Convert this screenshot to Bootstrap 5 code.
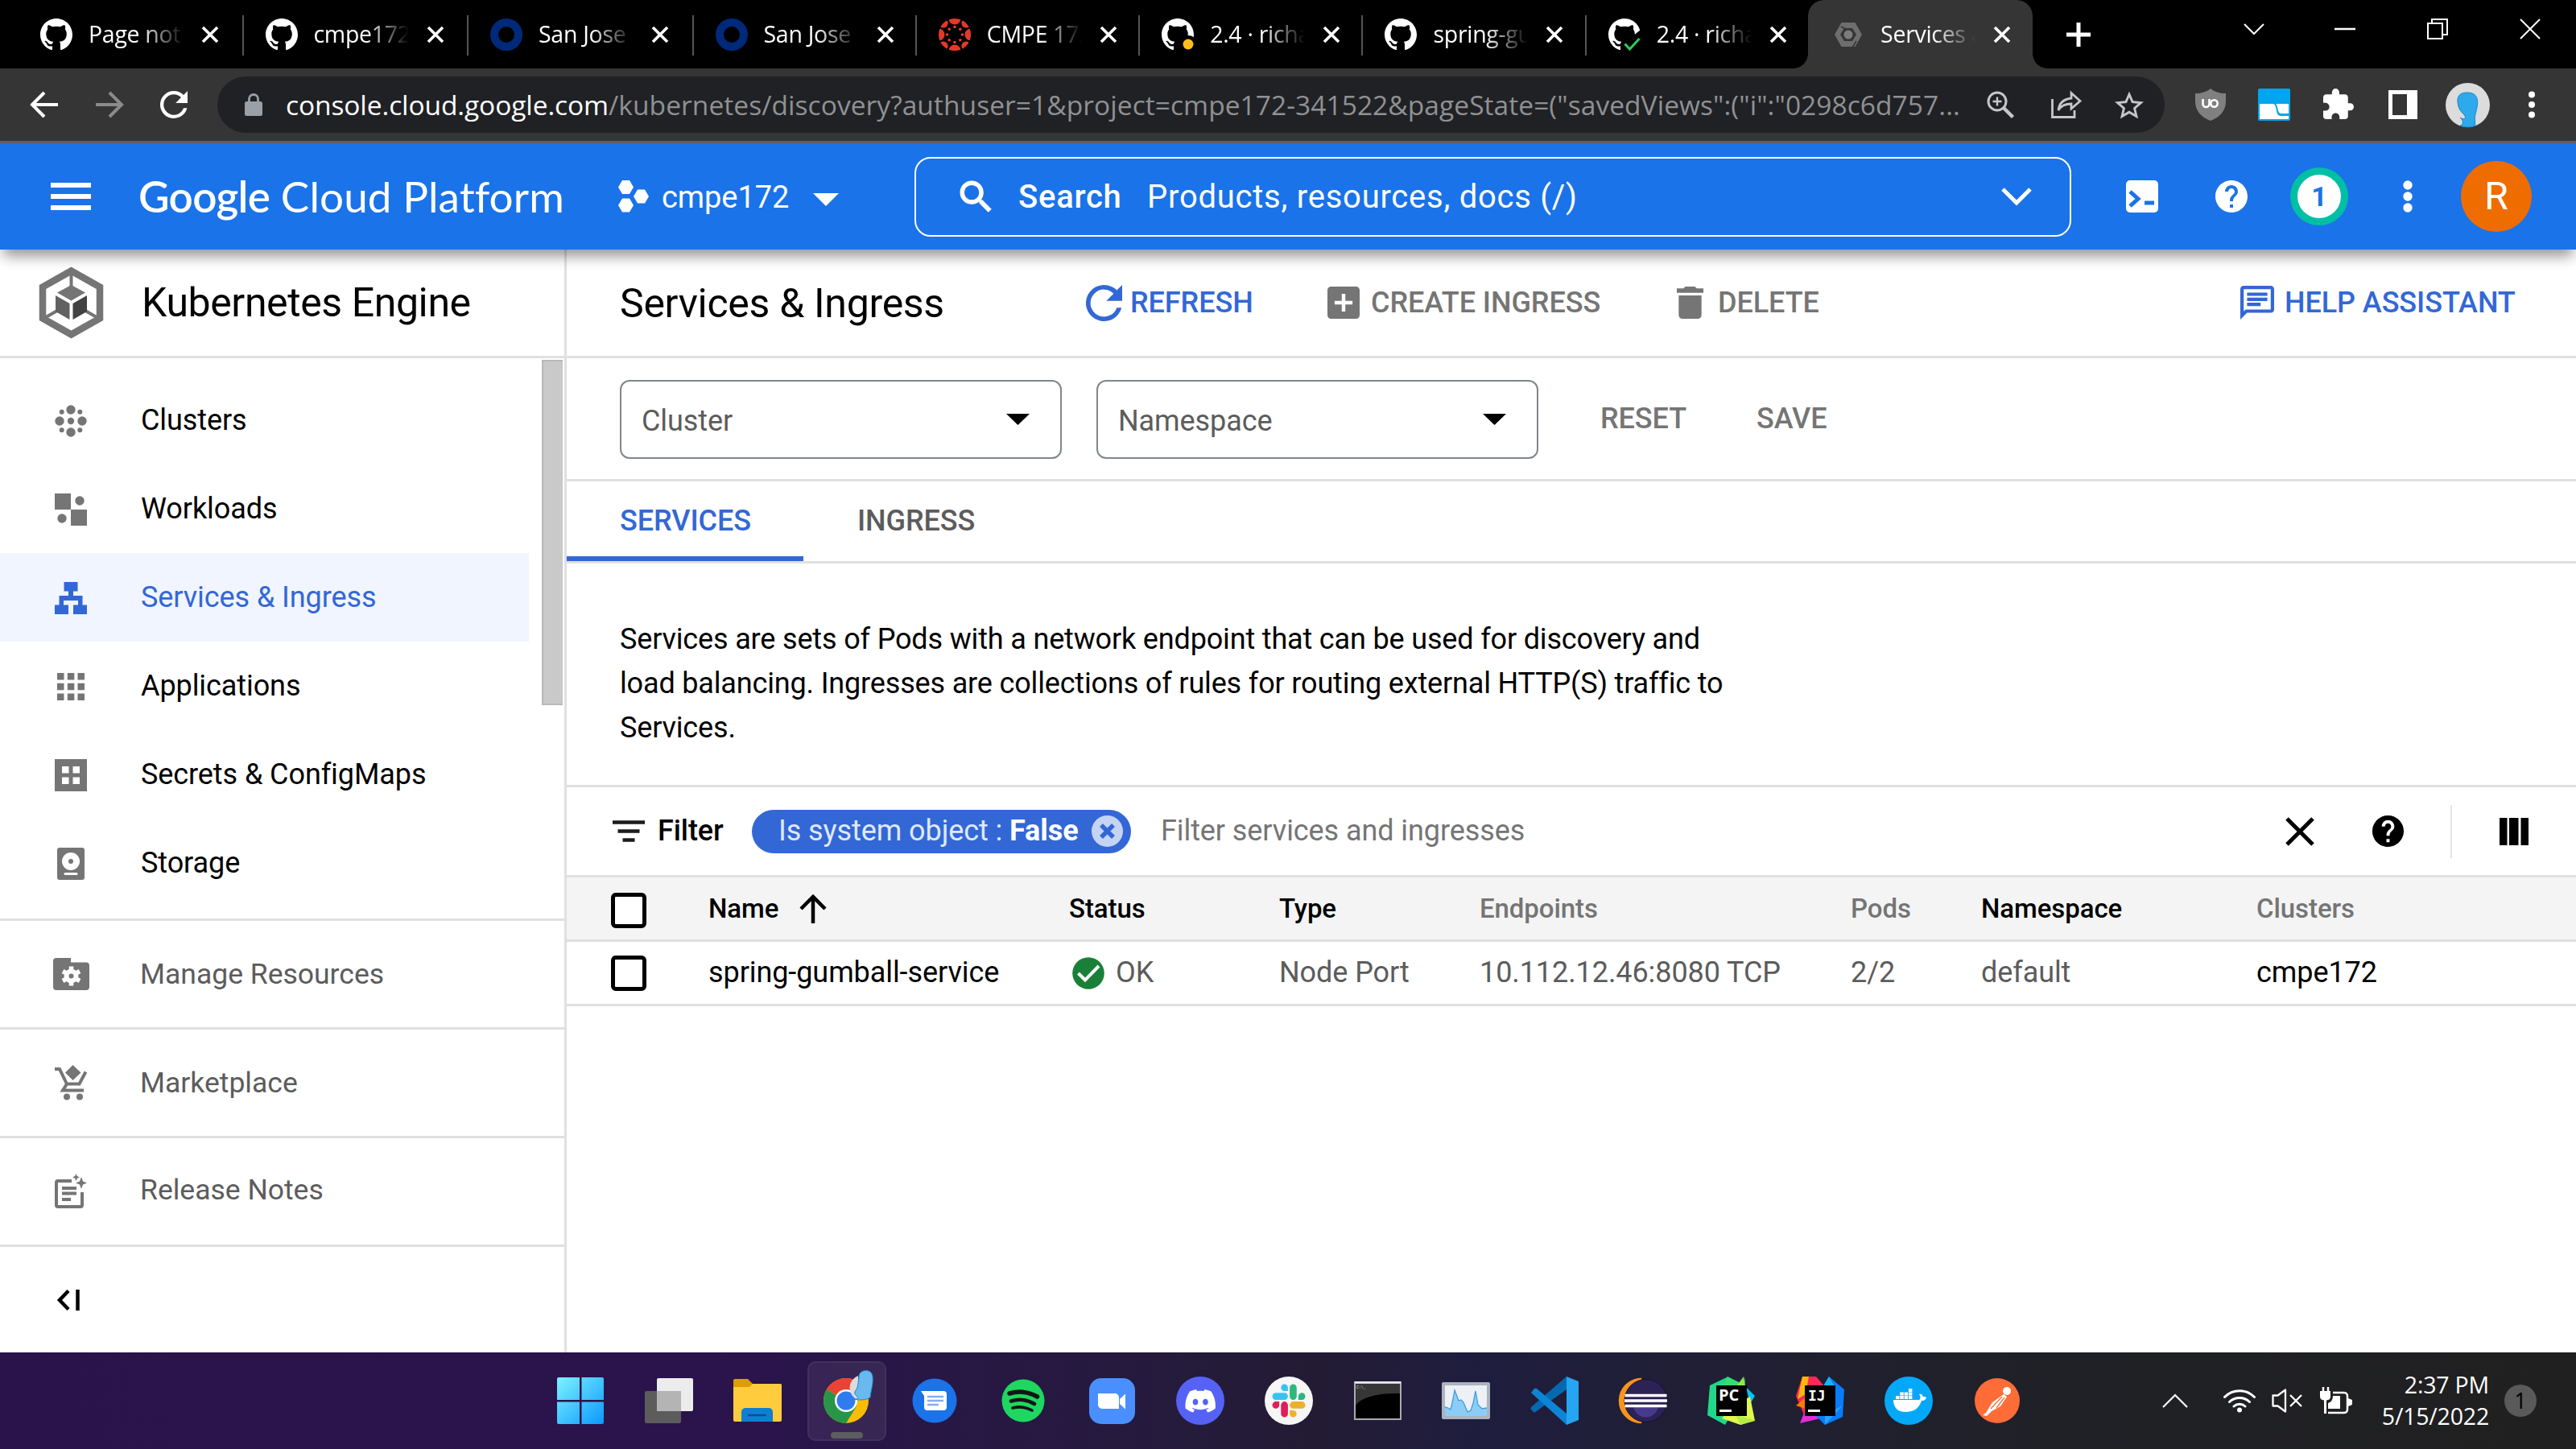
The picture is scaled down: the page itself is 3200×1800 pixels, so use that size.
<!DOCTYPE html>
<html lang="en">
<head>
<meta charset="utf-8">
<title>Services &amp; Ingress – Kubernetes Engine</title>
<link href="https://cdn.jsdelivr.net/npm/bootstrap@5.3.0/dist/css/bootstrap.min.css" rel="stylesheet">
<style>
html,body{height:1800px;overflow:hidden}
body{width:3200px;background:#fff;color:#000;font-family:Roboto,"Liberation Sans",sans-serif;font-size:36px;line-height:1.2;letter-spacing:-.08px}
svg{display:block;flex:none;overflow:visible}
.gridbar{display:grid;align-items:center}
.ui-sys{font-family:"Open Sans","Noto Sans",sans-serif}
.fw-med{font-weight:500}
/* browser chrome */
.tabstrip{height:85px;background:#000;color:#fff;padding-left:24px}
.btab{width:277.4px;height:85px;padding-left:26px;position:relative}
.btab:nth-child(-n+3){width:279.6px}
.btab::after{content:"";position:absolute;right:1px;top:19px;width:2px;height:50px;background:#555}
.btab.last-idle::after,.btab.on::after{display:none}
.btab .ttl{width:118px;margin-left:20px;font-size:28.5px;letter-spacing:-.3px;white-space:nowrap;overflow:hidden;-webkit-mask-image:linear-gradient(90deg,#000 55%,transparent 100%);mask-image:linear-gradient(90deg,#000 55%,transparent 100%)}
.btab .cls{margin-left:22px}
.btab.on{width:279px;margin-left:-3px;padding-left:30px;background:#353535;border-radius:20px 20px 0 0}
.btab .flare{position:absolute;bottom:0;width:18px;height:18px}
.btab .fl{left:-18px;background:radial-gradient(circle at 0 0,transparent 17.5px,#353535 18px)}
.btab .fr{right:-18px;background:radial-gradient(circle at 100% 0,transparent 17.5px,#353535 18px)}
.newtab{margin-left:42px}
.winctl{grid-template-columns:113px 115px 115px 70px;height:72px;margin-left:190px;align-self:flex-start}
.toolbar{height:93px;background:#353535;border-bottom:3px solid #606060;padding-left:38px;grid-template-columns:81px 80px 71px 2457px 78px 81px 81px 71px 102px 1fr}
.omni{width:2419px;height:70px;border-radius:35px;background:#202124;padding-left:34px;grid-template-columns:51px 2113px 80px 79px 1fr}
.omni .url{font-size:33.5px;letter-spacing:.06px;color:#8f9194;white-space:nowrap}
.omni .url b{font-weight:400;color:#fff;letter-spacing:-.1px}
/* cloud header */
.gcp{height:132px;background:#1a73e8;color:#fff;position:relative;z-index:3;box-shadow:0 12px 16px -4px rgba(0,0,0,.42);padding-left:63px;grid-template-columns:109px 596px 54px 188px 126px 1505px 111px 93px 140px 72px 1fr}
.glogo{font-family:Lato,sans-serif;font-size:53px;letter-spacing:.1px;white-space:nowrap}
.glogo span{letter-spacing:-.7px}
.gcp .proj{font-size:38px;padding-top:4px}
.gsearch{width:1437px;height:99px;border:2px solid #fff;border-radius:20px;padding-left:55px;font-size:40px;grid-template-columns:72px 160px 1061px 1fr}
.gsearch span{letter-spacing:.75px;padding-top:2px}
.notif{width:72px;height:72px;border:9px solid #00bfa5;border-radius:50%;background:#fff;color:#1a73e8;font-size:34px;font-weight:700}
.avat{width:88px;height:88px;border-radius:50%;background:#ef6c00;font-size:48px}
/* page */
.page{height:1370px}
.side{width:704px;border-right:3px solid #e0e0e0}
.side-head{height:135px;border-bottom:3px solid #e0e0e0;font-size:50px;letter-spacing:-.4px;padding-left:49px;gap:48px}
.side-scroll{height:696px;padding-top:22px;position:relative}
.side-scroll .thumb{position:absolute;right:2px;top:2px;width:26px;height:429px;background:#c9c9c9;border:2px solid #b8b8b8;border-right:0}
.side .nav-link{width:657px;height:110px;padding:1px 0 0 68px;gap:67px;color:#000;display:flex;align-items:center}
.side .nav-link svg{color:#757575}
.side .nav-link.active{background:#f0f5ff;color:#3367d6}
.side .nav-link.active svg{color:#3367d6}
.side-foot{height:135px;border-top:3px solid #e0e0e0;padding-left:66px;gap:63px;color:#5c5c5c;font-size:35.5px;letter-spacing:0}
.side-foot svg{color:#757575}
.actions{height:135px;border-bottom:3px solid #e0e0e0;padding-left:66px;grid-template-columns:579px 55px 245px 54px 380px 51px 649px 55px 1fr;color:#757575}
.actions span{padding-top:1px}
.actions .h-title{font-size:50px;color:#000;letter-spacing:-.3px}
.blue{color:#3367d6}
.filters{height:153px;border-bottom:3px solid #e0e0e0;padding:2px 0 0 66px;color:#757575}
.sel{width:549px;height:98px;border:2px solid #80868b;border-radius:12px;padding:5px 38px 0 25px;color:#5c5c5c;margin-right:43px}
.sel svg{margin-bottom:6px}
.f-reset{width:194px;margin-left:34px}
.tabsrow{height:102px;border-bottom:3px solid #e0e0e0}
.tabsrow .tb{height:99px;text-decoration:none;display:flex;align-items:center;color:#5c5c5c;padding:1px 0 0 67px}
.tabsrow .tb.cur{width:294px;color:#3367d6;border-bottom:6px solid #3367d6;padding:7px 0 0 66px}
.desc{height:278px;border-bottom:3px solid #e0e0e0;padding:67px 0 0 66px;line-height:55px;letter-spacing:-.16px}
.fbar{height:112px;border-bottom:3px solid #e0e0e0;padding-left:57px;grid-template-columns:56px 117px 508px 1397px 108px 97px 61px 1fr}
.chip{width:471px;height:54px;border-radius:27px;background:#3367d6;color:#dfe8fa;padding-left:33px}
.chip b{font-weight:700;color:#fff}
.svc{table-layout:fixed;border-collapse:separate;border-spacing:0;margin:0;width:2496px}
.svc>thead>tr>*,.svc>tbody>tr>*{height:80px;padding:0;border:0;border-bottom:3px solid #e0e0e0;vertical-align:middle;white-space:nowrap;box-shadow:none;line-height:1.2}
.svc thead th{background:#f4f4f4;font-size:33px;font-weight:500;color:#000}
.svc thead th.dim{color:#757575}
.svc tbody td{background:#fff;color:#5c5c5c}
.svc .strong-c{color:#000}
.cbx{width:44px;height:44px;border:5px solid #000;border-radius:6px;background:#fff;margin-left:55px}
thead .cbx{margin-top:5px}
/* taskbar */
.taskbar{height:120px;background:linear-gradient(90deg,#2a134b 0,#2a144b 30%,#241b3a 47%,#231b34 51%,#1f1d3e 57%,#201f33 68%,#202126 80%,#202020 100%);color:#fff}
.apps{margin-left:666px}
.slot{width:110px;height:120px}
.slot.on{position:relative}
.slot.on::before{content:"";position:absolute;left:7px;top:11px;width:98px;height:99px;border-radius:10px;background:rgba(255,255,255,.07);border:2px solid rgba(255,255,255,.05)}
.slot.on::after{content:"";position:absolute;left:36px;top:99px;width:40px;height:8px;border-radius:4px;background:#5d5d5f}
.slot svg{position:relative}
.tray{padding-left:150px}
.clock{width:200px;margin-left:-30px;font-size:28.5px;line-height:39px;letter-spacing:-.2px}
.cnt{width:40px;height:40px;border-radius:50%;background:#5a5a5a;color:#000;font-size:27px;margin-left:19px}
</style>
<script src="https://cdn.jsdelivr.net/npm/bootstrap@5.3.0/dist/js/bootstrap.bundle.min.js"></script>
</head>
<body>
<svg width="0" height="0" class="position-absolute">
<defs>
<symbol id="gh" viewBox="0 0 16 16"><path fill="#fff" d="M8 0C3.58 0 0 3.58 0 8c0 3.54 2.29 6.53 5.47 7.59.4.07.55-.17.55-.38 0-.19-.01-.82-.01-1.49-2.01.37-2.53-.49-2.69-.94-.09-.23-.48-.94-.82-1.13-.28-.15-.68-.52-.01-.53.63-.01 1.08.58 1.23.82.72 1.21 1.87.87 2.33.66.07-.52.28-.87.51-1.07-1.78-.2-3.64-.89-3.64-3.95 0-.87.31-1.59.82-2.15-.08-.2-.36-1.02.08-2.12 0 0 .67-.21 2.2.82.64-.18 1.32-.27 2-.27.68 0 1.36.09 2 .27 1.53-1.04 2.2-.82 2.2-.82.44 1.1.16 1.92.08 2.12.51.56.82 1.27.82 2.15 0 3.07-1.87 3.75-3.65 3.95.29.25.54.73.54 1.48 0 1.07-.01 1.93-.01 2.2 0 .21.15.46.55.38A8.013 8.013 0 0016 8c0-4.42-3.58-8-8-8z"/></symbol>
<symbol id="x" viewBox="0 0 22 22"><path d="M2 2l18 18M20 2L2 20" stroke="#fff" stroke-width="3.6" fill="none"/></symbol>
<symbol id="ring" viewBox="0 0 40 40"><circle cx="20" cy="20" r="15" fill="none" stroke="#00297a" stroke-width="10"/></symbol>
<symbol id="help" viewBox="2 2 20 20"><path fill="currentColor" d="M12 2C6.48 2 2 6.48 2 12s4.48 10 10 10 10-4.48 10-10S17.52 2 12 2zm1 17h-2v-2h2v2zm2.07-7.75l-.9.92C13.45 12.9 13 13.5 13 15h-2v-.5c0-1.1.45-2.1 1.17-2.83l1.24-1.26c.37-.36.59-.86.59-1.41 0-1.1-.9-2-2-2s-2 .9-2 2H8c0-2.21 1.79-4 4-4s4 1.79 4 4c0 .88-.36 1.68-.93 2.25z"/></symbol>
</defs>
</svg>

<!-- tab strip -->
<div class="tabstrip ui-sys d-flex align-items-center">
  <div class="btab d-flex align-items-center"><svg width="40" height="40"><use href="#gh"/></svg><span class="ttl">Page not found</span><svg class="cls" width="22" height="22"><use href="#x"/></svg></div>
  <div class="btab d-flex align-items-center"><svg width="40" height="40"><use href="#gh"/></svg><span class="ttl">cmpe172/</span><svg class="cls" width="22" height="22"><use href="#x"/></svg></div>
  <div class="btab d-flex align-items-center"><svg width="40" height="40"><use href="#ring"/></svg><span class="ttl">San Jose</span><svg class="cls" width="22" height="22"><use href="#x"/></svg></div>
  <div class="btab d-flex align-items-center"><svg width="40" height="40"><use href="#ring"/></svg><span class="ttl">San Jose</span><svg class="cls" width="22" height="22"><use href="#x"/></svg></div>
  <div class="btab d-flex align-items-center"><svg width="40" height="40" viewBox="-20 -20 40 40"><clipPath id="cc"><circle r="20"/></clipPath><g fill="#e4392a"><g clip-path="url(#cc)"><circle cx="20" r="7.500"/><circle cx="-20" r="7.500"/><circle cy="20" r="7.500"/><circle cy="-20" r="7.500"/><circle cx="14.200" cy="14.200" r="5.800"/><circle cx="-14.200" cy="14.200" r="5.800"/><circle cx="14.200" cy="-14.200" r="5.800"/><circle cx="-14.200" cy="-14.200" r="5.800"/></g><circle cx="9.500" r="1.800"/><circle cx="-9.500" r="1.800"/><circle cy="9.500" r="1.800"/><circle cy="-9.500" r="1.800"/><circle cx="6.800" cy="6.800" r="1.800"/><circle cx="-6.800" cy="6.800" r="1.800"/><circle cx="6.800" cy="-6.800" r="1.800"/><circle cx="-6.800" cy="-6.800" r="1.800"/></g></svg><span class="ttl">CMPE 172</span><svg class="cls" width="22" height="22"><use href="#x"/></svg></div>
  <div class="btab d-flex align-items-center"><svg width="40" height="40"><use href="#gh"/><circle cx="33" cy="32" r="11" fill="#000"/><circle cx="33" cy="32" r="6.5" fill="#fbbf17"/></svg><span class="ttl">2.4 · richard</span><svg class="cls" width="22" height="22"><use href="#x"/></svg></div>
  <div class="btab d-flex align-items-center"><svg width="40" height="40"><use href="#gh"/></svg><span class="ttl">spring-gumball</span><svg class="cls" width="22" height="22"><use href="#x"/></svg></div>
  <div class="btab last-idle d-flex align-items-center"><svg width="40" height="40"><use href="#gh"/><path d="M19 40V31L40 14V40z" fill="#000"/><path d="M20.500 31.500l6 6.500 12-13" fill="none" stroke="#2ecc57" stroke-width="3"/></svg><span class="ttl">2.4 · richard</span><svg class="cls" width="22" height="22"><use href="#x"/></svg></div>
  <div class="btab on d-flex align-items-center"><i class="flare fl"></i><i class="flare fr"></i><svg width="40" height="40" viewBox="0 0 40 40"><path d="M11.500 5h17L37 20l-8.500 15h-17L3 20z M15 12l-5 8 5 8h10l5-8-5-8z" fill="#6e6e6e" fill-rule="evenodd"/><circle cx="20" cy="20" r="5.500" fill="#7c7c7c"/><path d="M11 10l6 3M30 28l-5 8" stroke="#353535" stroke-width="1.500"/></svg><span class="ttl">Services &amp;</span><svg class="cls" width="22" height="22"><use href="#x"/></svg></div>
  <svg class="newtab" width="30" height="30" viewBox="0 0 30 30"><path d="M15 0v30M0 15h30" stroke="#fff" stroke-width="5"/></svg>
  <div class="winctl gridbar">
    <svg width="26" height="14" viewBox="0 0 26 14"><path d="M1 1l12 12L25 1" stroke="#fff" stroke-width="2" fill="none"/></svg>
    <svg width="26" height="4"><path d="M0 2h26" stroke="#fff" stroke-width="2.500"/></svg>
    <svg width="26" height="26" viewBox="0 0 26 26"><path d="M1 6h18v19H1zM6 6V1h19v19h-5" stroke="#fff" stroke-width="2" fill="none"/></svg>
    <svg width="26" height="26" viewBox="0 0 26 26"><path d="M1 1l24 24M25 1L1 25" stroke="#fff" stroke-width="2"/></svg>
  </div>
</div>

<!-- address bar -->
<div class="toolbar gridbar">
  <svg width="34" height="32" viewBox="0 0 34 32"><path d="M34 16H3M17 1L2 16l15 15" fill="none" stroke="#fff" stroke-width="4"/></svg>
  <svg width="34" height="32" viewBox="0 0 34 32"><path d="M0 16h31M17 1l15 15-15 15" fill="none" stroke="#8b8b8b" stroke-width="4"/></svg>
  <svg width="34" height="34" viewBox="4 4 16 16"><path fill="#fff" d="M17.650 6.350A7.960 7.960 0 0 0 12 4a8 8 0 1 0 7.730 10h-2.080A6 6 0 1 1 12 6c1.660 0 3.140.69 4.220 1.780L13 11h7V4l-2.350 2.350z"/></svg>
  <div class="omni gridbar ui-sys">
    <svg width="22" height="28" viewBox="0 0 22 28"><rect y="10" width="22" height="18" rx="2.500" fill="#9aa0a6"/><path d="M5.500 11V7a5.500 5.500 0 0 1 11 0v4" fill="none" stroke="#9aa0a6" stroke-width="2.800"/></svg>
    <span class="url"><b>console.cloud.google.com</b>/kubernetes/discovery?authuser=1&amp;project=cmpe172-341522&amp;pageState=("savedViews":("i":"0298c6d757...</span>
    <svg width="34" height="34" viewBox="0 0 34 34" fill="none" stroke="#c4c7c9" stroke-width="3"><circle cx="13" cy="13" r="11"/><path d="M21 21l11.500 11.500" stroke-width="4.500"/><path d="M13 7.500v11M7.500 13h11" stroke-width="2.400"/></svg>
    <svg width="38" height="34" viewBox="0 0 38 34" fill="none" stroke="#c4c7c9" stroke-width="2.800"><path d="M1.500 10v22.500H29V24"/><path d="M25 2.500L36 12.500 25 22v-6c-8 0-13 2.500-16 8 1-9 7-14 16-15z"/></svg>
    <svg width="36" height="35" viewBox="2 2 20 19"><path fill="#c4c7c9" d="M22 9.240l-7.190-.62L12 2 9.190 8.630 2 9.240l5.460 4.730L5.820 21 12 17.270 18.180 21l-1.630-7.030L22 9.240zM12 15.400l-3.760 2.270 1-4.280-3.320-2.880 4.380-.38L12 6.100l1.710 4.040 4.380.38-3.320 2.880 1 4.280L12 15.400z"/></svg>
  </div>
  <svg width="38" height="40" viewBox="0 0 38 40"><path d="M19 0c5 4 11 6 19 6v10c0 12-8 20-19 24C8 36 0 28 0 16V6c8 0 14-2 19-6z" fill="#808080"/><path d="M9.500 13v6a4 4 0 0 0 8 0v-6v6" fill="none" stroke="#fff" stroke-width="2.600"/><circle cx="23.500" cy="18.500" r="4.200" fill="none" stroke="#fff" stroke-width="2.600"/></svg>
  <svg width="40" height="40" viewBox="0 0 40 40"><rect width="40" height="40" rx="2" fill="#04a5f0"/><path d="M2 19h16c4 0 4 4 5 9s3 6 6 6h9v4H2z" fill="#fff"/><path d="M22 19h16v12h-9c-4 0-4-4-5-8s-2-4-2-4z" fill="#fff"/></svg>
  <svg width="38" height="38" viewBox="2 1.500 21 21"><path fill="#fff" d="M20.500 11H19V7c0-1.100-.9-2-2-2h-4V3.500a2.500 2.500 0 0 0-5 0V5H4c-1.100 0-1.990.9-1.990 2v3.800H3.500c1.490 0 2.700 1.210 2.700 2.700s-1.210 2.700-2.700 2.700H2V20c0 1.100.9 2 2 2h3.800v-1.500c0-1.490 1.210-2.700 2.700-2.700 1.490 0 2.700 1.210 2.700 2.700V22H17c1.100 0 2-.9 2-2v-4h1.500a2.500 2.500 0 0 0 0-5z"/></svg>
  <svg width="36" height="36" viewBox="0 0 36 36"><path fill="#fff" fill-rule="evenodd" d="M0 0h36v36H0zM5 5v26h18V5z"/></svg>
  <svg width="55" height="55" viewBox="0 0 55 55"><circle cx="27.500" cy="27.500" r="27.500" fill="#dcdcdc"/><path d="M18 43c5 4 4 9 0 10 6 2.500 13 2.500 19 0-1-7-1-12 1-18 4-15 1-23-11-23S14 19 15.500 27s6 10 8.500 14c2 4-2 5-6 2z" fill="#2da9ec" stroke="#1b87c4"/></svg>
  <svg width="10" height="34" viewBox="0 0 10 34" fill="#fff"><circle cx="5" cy="4.500" r="4"/><circle cx="5" cy="17" r="4"/><circle cx="5" cy="29.500" r="4"/></svg>
</div>

<!-- cloud console header -->
<header class="gcp gridbar">
  <svg width="50" height="34"><path d="M0 3h50M0 17h50M0 31h50" stroke="#fff" stroke-width="6"/></svg>
  <span class="glogo"><span class="fw-semibold">Google</span> Cloud Platform</span>
  <svg width="38" height="40" viewBox="0 0 38 40" fill="#fff"><path d="M5 0h9l5 8.500-5 8.500H5L0 8.500zM5 22.500h9l5 8.500-5 8.500H5L0 31zM24 11.500h9l5 8.500-5 8.500h-9L19 20z"/></svg>
  <span class="proj">cmpe172</span>
  <svg width="32" height="16" viewBox="0 0 32 16" class="mt-2"><path d="M0 0h32L16 16z" fill="#fff"/></svg>
  <div class="gsearch gridbar">
    <svg width="38" height="38" viewBox="3 3 17.500 17.500"><path fill="#fff" stroke="#fff" stroke-width=".5" d="M15.500 14h-.79l-.28-.27A6.471 6.471 0 0 0 16 9.500 6.500 6.500 0 1 0 9.500 16c1.610 0 3.090-.59 4.230-1.570l.27.28v.79l5 4.990L20.490 19l-4.990-5zm-6 0C7.010 14 5 11.990 5 9.500S7.010 5 9.500 5 14 7.010 14 9.500 11.990 14 9.500 14z"/></svg>
    <span class="fw-med">Search</span><span>Products, resources, docs (/)</span>
    <svg width="38" height="22" viewBox="0 0 38 22"><path d="M2 2l17 17L36 2" fill="none" stroke="#fff" stroke-width="5"/></svg>
  </div>
  <svg width="40" height="40" viewBox="0 0 40 40"><rect width="40" height="40" rx="5" fill="#fff"/><path d="M5 14l10 9-10 9" fill="none" stroke="#1a73e8" stroke-width="5"/><path d="M23 28h12" stroke="#1a73e8" stroke-width="5"/></svg>
  <svg width="40" height="40"><use href="#help"/></svg>
  <span class="notif d-flex align-items-center justify-content-center">1</span>
  <svg width="12" height="40" viewBox="0 0 12 40" fill="#fff"><circle cx="6" cy="6" r="5.700"/><circle cx="6" cy="20" r="5.700"/><circle cx="6" cy="34" r="5.700"/></svg>
  <span class="avat d-flex align-items-center justify-content-center">R</span>
</header>

<div class="page d-flex">
  <aside class="side">
    <div class="side-head d-flex align-items-center">
      <svg width="79" height="88" viewBox="0 0 79 88"><path d="M39.500 4.500L75 24.500v39l-35.500 20L4 63.500v-39z" fill="none" stroke="#757575" stroke-width="8.500"/><path d="M39.500 8v16M8 62l14-8M71 62l-14-8" stroke="#757575" stroke-width="4"/><path d="M39.500 22l17.500 9.500-17.500 10-17.500-10z" fill="#757575"/><path d="M20 35l17.500 10v20L20 55z" fill="#616161"/><path d="M59 35L41.500 45v20L59 55z" fill="#424242"/></svg>
      <span>Kubernetes Engine</span>
    </div>
    <nav class="side-scroll nav flex-column flex-nowrap">
      <a class="nav-link"><svg width="40" height="40" viewBox="0 0 40 40" fill="currentColor"><circle cx="20" cy="6" r="5.700"/><circle cx="20" cy="34" r="5.700"/><circle cx="6" cy="20" r="5.700"/><circle cx="34" cy="20" r="5.700"/><circle cx="20" cy="20" r="4.200"/><circle cx="8.700" cy="8.700" r="3"/><circle cx="31.300" cy="8.700" r="3"/><circle cx="8.700" cy="31.300" r="3"/><circle cx="31.300" cy="31.300" r="3"/></svg>Clusters</a>
      <a class="nav-link"><svg width="40" height="40" viewBox="0 0 40 40" fill="currentColor"><path d="M0 0h20v20H0zM20 20h20v20H20z"/><circle cx="31" cy="9" r="5.700"/><circle cx="9" cy="31" r="5.700"/></svg>Workloads</a>
      <a class="nav-link active"><svg width="40" height="40" viewBox="0 0 40 40" fill="currentColor"><path d="M11.500 0h17v11.500h-5.500v5.500h11.500v11.500H40V40H23V28.500h6V23H11v5.500h6V40H0V28.500h5.500V17H17v-5.500h-5.500z"/></svg>Services &amp; Ingress</a>
      <a class="nav-link"><svg width="40" height="40" viewBox="0 0 40 40" fill="currentColor"><path d="M3 3h8.500v8.500H3zM15.800 3h8.500v8.500h-8.500zM28.500 3H37v8.500h-8.500zM3 15.800h8.500v8.500H3zM15.800 15.800h8.500v8.500h-8.500zM28.500 15.800H37v8.500h-8.500zM3 28.500h8.500V37H3zM15.800 28.500h8.500V37h-8.500zM28.500 28.500H37V37h-8.500z"/></svg>Applications</a>
      <a class="nav-link"><svg width="40" height="40" viewBox="0 0 40 40" fill="currentColor"><path fill-rule="evenodd" d="M0 0h40v40H0zM9 9v8.500h8.500V9zM22.500 9v8.500H31V9zM9 22.500V31h8.500v-8.500zM22.500 22.500V31H31v-8.500z"/></svg>Secrets &amp; ConfigMaps</a>
      <a class="nav-link"><svg width="40" height="40" viewBox="0 0 40 40"><rect x="3" width="34" height="40" rx="3" fill="currentColor"/><circle cx="20" cy="17" r="11" fill="#fff"/><circle cx="20" cy="17" r="3" fill="currentColor"/><path d="M13 32.500h14" stroke="#fff" stroke-width="3" stroke-linecap="round"/></svg>Storage</a>
      <i class="thumb"></i>
    </nav>
    <div class="side-foot d-flex align-items-center"><svg width="45" height="40" viewBox="0 0 45 40"><path d="M4 0h18v5.500h19a4 4 0 0 1 4 4V36a4 4 0 0 1-4 4H4a4 4 0 0 1-4-4V4a4 4 0 0 1 4-4z" fill="currentColor"/><circle cx="22.500" cy="22.500" r="6" fill="none" stroke="#fff" stroke-width="6"/><g stroke="#fff" stroke-width="5.500"><path d="M22.500 10.500v4M22.500 30.500v4M12 16.500l3.500 2M29.500 26.500l3.500 2M12 28.500l3.500-2M29.500 18.500l3.500-2"/></g></svg><span>Manage Resources</span></div>
    <div class="side-foot d-flex align-items-center"><svg width="45" height="44" viewBox="0 0 45 44"><path d="M24.500 0l10 9.500-10 9.500-9.500-9.500z" fill="currentColor"/><path d="M2 5h6l9 18.500h15.500L40.500 8.500M17 23.500l-5 8h26" fill="none" stroke="currentColor" stroke-width="4"/><circle cx="17" cy="39.500" r="4" fill="currentColor"/><circle cx="33" cy="39.500" r="4" fill="currentColor"/></svg><span>Marketplace</span></div>
    <div class="side-foot d-flex align-items-center"><svg width="45" height="44" viewBox="0 0 45 44"><path d="M23 9H6a2 2 0 0 0-2 2v28a2 2 0 0 0 2 2h28a2 2 0 0 0 2-2V23" fill="none" stroke="currentColor" stroke-width="4"/><path d="M11 18h18M11 24.500h18M11 32h11" stroke="currentColor" stroke-width="4"/><path d="M35 4l2 5.500 5 2-5 2-2 5.500-2-5.500-5-2 5-2zM28.500 0l1.300 3 3.200 1.500-3.200 1.300-1.300 3.200-1.300-3.200L24 4.500 27.200 3z" fill="currentColor"/></svg><span class="mb-1">Release Notes</span></div>
    <div class="side-foot d-flex align-items-center"><svg style="margin-left:6px" width="27" height="26" viewBox="0 0 27 26"><path d="M13 1.500L2 13l11 11.500M24.500 0v26" fill="none" stroke="#000" stroke-width="4.500"/></svg></div>
  </aside>

  <main class="flex-grow-1">
    <div class="actions gridbar fw-med">
      <span class="h-title fw-normal">Services &amp; Ingress</span>
      <svg width="45" height="45" viewBox="4 4 16 16" class="blue"><path fill="currentColor" d="M17.650 6.350A7.960 7.960 0 0 0 12 4a8 8 0 1 0 7.730 10h-2.080A6 6 0 1 1 12 6c1.660 0 3.140.69 4.220 1.780L13 11h7V4l-2.350 2.350z"/></svg>
      <span class="blue">REFRESH</span>
      <svg width="40" height="40" viewBox="3 3 18 18"><path fill="currentColor" d="M19 3H5a2 2 0 0 0-2 2v14a2 2 0 0 0 2 2h14a2 2 0 0 0 2-2V5a2 2 0 0 0-2-2zm-2 10h-4v4h-2v-4H7v-2h4V7h2v4h4v2z"/></svg>
      <span>CREATE INGRESS</span>
      <svg width="33" height="40" viewBox="5 3 14 18" preserveAspectRatio="none"><path fill="currentColor" d="M6 19a2 2 0 0 0 2 2h8a2 2 0 0 0 2-2V8H6v11zM19 4h-3.500l-1-1h-5l-1 1H5v2.500h14V4z"/></svg>
      <span>DELETE</span>
      <svg width="42" height="42" viewBox="2 2 20 20" class="blue"><path fill="currentColor" d="M4 4h16v12H5.170L4 17.170V4m0-2c-1.100 0-1.990.9-1.990 2L2 22l4-4h14c1.100 0 2-.9 2-2V4c0-1.100-.9-2-2-2H4zm2 10h8v2H6v-2zm0-3h12v2H6V9zm0-3h12v2H6V6z"/></svg>
      <span class="blue">HELP ASSISTANT</span>
    </div>
    <div class="filters d-flex align-items-center">
      <div class="sel d-flex align-items-center justify-content-between">Cluster<svg width="29" height="14" viewBox="0 0 29 14"><path d="M0 0h29L14.500 14z"/></svg></div>
      <div class="sel d-flex align-items-center justify-content-between">Namespace<svg width="29" height="14" viewBox="0 0 29 14"><path d="M0 0h29L14.500 14z"/></svg></div>
      <span class="f-reset fw-med">RESET</span>
      <span class="fw-med">SAVE</span>
    </div>
    <div class="tabsrow d-flex fw-med">
      <a class="tb cur">SERVICES</a><a class="tb">INGRESS</a>
    </div>
    <p class="desc mb-0">Services are sets of Pods with a network endpoint that can be used for discovery and<br>load balancing. Ingresses are collections of rules for routing external HTTP(S) traffic to<br>Services.</p>
    <div class="fbar gridbar">
      <svg width="40" height="27"><path d="M0 2.500h40M6.500 13.500h27M12.500 24.500h15" stroke="#1c1c1c" stroke-width="4.600"/></svg>
      <span class="fw-med">Filter</span>
      <span class="chip d-flex align-items-center">Is system object&nbsp;:&nbsp;<b>False</b><svg width="39" height="39" viewBox="0 0 39 39" class="ms-3"><circle cx="19.500" cy="19.500" r="19.500" fill="#c5d4f4"/><path d="M12 12l15 15M27 12L12 27" stroke="#3367d6" stroke-width="5.500"/></svg></span>
      <span style="color:#757575">Filter services and ingresses</span>
      <svg width="36" height="36" viewBox="0 0 36 36"><path d="M2 2l32 32M34 2L2 34" stroke="#000" stroke-width="5"/></svg>
      <svg width="39" height="39"><use href="#help"/></svg>
      <svg width="2" height="66"><path d="M1 0v66" stroke="#e4e4e4" stroke-width="2"/></svg>
      <svg width="36" height="34" viewBox="0 0 36 34"><path d="M0 0h9.500v34H0zM12 0h11.500v34H12zM26.500 0H36v34h-9.500z"/></svg>
    </div>
    <table class="table svc">
      <colgroup><col style="width:176px"><col style="width:448px"><col style="width:261px"><col style="width:249px"><col style="width:461px"><col style="width:162px"><col style="width:342px"><col></colgroup>
      <thead><tr><th><div class="cbx"></div></th><th><div class="d-flex align-items-center">Name<svg style="margin-left:26px" width="34" height="36" viewBox="0 0 34 36"><path d="M17 36V4M2 18L17 3l15 15" fill="none" stroke="#000" stroke-width="4.500"/></svg></div></th><th>Status</th><th>Type</th><th class="dim">Endpoints</th><th class="dim">Pods</th><th>Namespace</th><th class="dim">Clusters</th></tr></thead>
      <tbody><tr><td><div class="cbx"></div></td><td class="strong-c">spring-gumball-service</td><td><div class="d-flex align-items-center"><svg style="margin:0 14px 0 4px" width="40" height="40" viewBox="0 0 40 40"><circle cx="20" cy="20" r="19.800" fill="#1a8038"/><path d="M7.500 20l8.500 8.500L33 11" fill="none" stroke="#fff" stroke-width="4"/></svg>OK</div></td><td>Node Port</td><td>10.112.12.46:8080 TCP</td><td>2/2</td><td>default</td><td class="strong-c">cmpe172</td></tr></tbody>
    </table>
  </main>
</div>

<!-- taskbar -->
<footer class="taskbar ui-sys d-flex align-items-center">
  <div class="apps d-flex">
    <div class="slot d-flex align-items-center justify-content-center"><svg width="58" height="58" viewBox="0 0 58 58"><defs><linearGradient id="w" x2="1" y2="1"><stop stop-color="#7df3ff"/><stop offset="1" stop-color="#0a98ff"/></linearGradient></defs><path d="M2 0h26v28H0V2a2 2 0 0 1 2-2zM30.500 0H56a2 2 0 0 1 2 2v26H30.500zM0 30.500h28V58H2a2 2 0 0 1-2-2zM30.500 30.500H58V56a2 2 0 0 1-2 2H30.500z" fill="url(#w)"/></svg></div>
    <div class="slot d-flex align-items-center justify-content-center"><svg width="60" height="56" viewBox="0 0 60 56"><rect y="16" width="45" height="40" rx="2" fill="#5c5c5c"/><rect x="15" width="45" height="41" rx="2" fill="#ececec"/><path d="M15 16h30v25H15z" fill="#b4b4b4"/></svg></div>
    <div class="slot d-flex align-items-center justify-content-center"><svg width="60" height="54" viewBox="0 0 60 54"><path d="M2 0h16l6 6h34a2 2 0 0 1 2 2v15H0V2a2 2 0 0 1 2-2z" fill="#dd9d05"/><path d="M0 10h20l4-4h34a2 2 0 0 1 2 2v43a2 2 0 0 1-2 2H2a2 2 0 0 1-2-2z" fill="#ffcc3d"/><path d="M10 53V41a5 5 0 0 1 5-5h29a5 5 0 0 1 5 5v12z" fill="#0f7fd2"/><path d="M18 45h23" stroke="#0a4f98" stroke-width="2.500"/></svg></div>
    <div class="slot on d-flex align-items-center justify-content-center"><svg width="56" height="56" viewBox="0 0 56 56"><circle cx="28" cy="28" r="28" fill="#fbbc05"/><path d="M28 28L3.800 14A28 28 0 0 1 52.200 14z" fill="#ea4335"/><path d="M28 0a28 28 0 0 1 24.200 14H28z" fill="#ea4335"/><path d="M3.800 14A28 28 0 0 0 28 56l13-21-13-7z" fill="#299547"/><circle cx="28" cy="28" r="14" fill="#fff"/><circle cx="28" cy="28" r="11.500" fill="#2f7cf0"/><path d="M43 -3a16 16 0 0 0 0 30z" fill="#dcdcdc"/><path d="M43 24c-3-3-6-4-3-9 3-3 3-10 4-17 0-9 16-11 17 0 1 10-2 16-3 26-4 3-15 4-19 2 3 0 4-1 4-2z" fill="#69b8f0" stroke="#1f86c8"/></svg></div>
    <div class="slot d-flex align-items-center justify-content-center"><svg width="56" height="56" viewBox="0 0 56 56"><circle cx="28" cy="28" r="27.500" fill="#1a73e8"/><path d="M11 16h28a4 4 0 0 1 4 4v16a4 4 0 0 1-4 4H19a4 4 0 0 1-4-4V22z" fill="#fff"/><path d="M19 23h20M19 28h20M19 33h14" stroke="#86adf2" stroke-width="2.400"/></svg></div>
    <div class="slot d-flex align-items-center justify-content-center"><svg width="54" height="54" viewBox="0 0 54 54"><circle cx="27" cy="27" r="26.500" fill="#1ed760"/><path d="M10 18c12-3.500 24-2 34.500 4" stroke-width="5.500" fill="none" stroke="#151515" stroke-linecap="round"/><path d="M12 27.500c10-3 20-2 29 3.500" stroke-width="4.500" fill="none" stroke="#151515" stroke-linecap="round"/><path d="M14 36c8-2 16-1.500 24 3" stroke-width="3.600" fill="none" stroke="#151515" stroke-linecap="round"/></svg></div>
    <div class="slot d-flex align-items-center justify-content-center"><svg width="57" height="57" viewBox="0 0 57 57"><rect width="57" height="57" rx="15" fill="#4a8fff"/><path d="M11 19h21a5 5 0 0 1 5 5v14H16a5 5 0 0 1-5-5zM38 26l7-6.500v19L38 32z" fill="#fff"/></svg></div>
    <div class="slot d-flex align-items-center justify-content-center"><svg width="60" height="60" viewBox="0 0 60 60"><circle cx="30" cy="30" r="30" fill="#5662f6"/><g transform="translate(11.500 11.500) scale(1.560)"><path fill="#fff" d="M20.317 4.370a19.790 19.790 0 00-4.885-1.515.074.074 0 00-.079.037c-.211.375-.445.865-.608 1.250-1.845-.276-3.680-.276-5.487 0-.164-.393-.406-.874-.618-1.250a.077.077 0 00-.079-.037 19.736 19.736 0 00-4.885 1.515.070.070 0 00-.032.028C.533 9.046-.319 13.580.099 18.058a.082.082 0 00.031.056c2.053 1.508 4.041 2.423 5.993 3.029a.078.078 0 00.084-.028c.462-.630.873-1.295 1.226-1.994a.076.076 0 00-.042-.106c-.653-.248-1.274-.550-1.872-.892a.077.077 0 01-.008-.128c.126-.094.252-.192.372-.291a.074.074 0 01.078-.011c3.928 1.793 8.180 1.793 12.061 0a.074.074 0 01.079.010c.120.099.246.198.373.292a.077.077 0 01-.007.128 12.299 12.299 0 01-1.873.891.077.077 0 00-.041.107c.360.698.772 1.363 1.225 1.993a.076.076 0 00.084.029c1.961-.607 3.950-1.522 6.002-3.029a.077.077 0 00.031-.055c.500-5.177-.838-9.674-3.549-13.660a.061.061 0 00-.031-.029zM8.020 15.331c-1.183 0-2.157-1.086-2.157-2.419 0-1.333.956-2.419 2.157-2.419 1.211 0 2.176 1.095 2.157 2.419 0 1.333-.956 2.419-2.157 2.419zm7.975 0c-1.183 0-2.157-1.086-2.157-2.419 0-1.333.955-2.419 2.157-2.419 1.211 0 2.176 1.095 2.157 2.419 0 1.333-.946 2.419-2.157 2.419z"/></g></svg></div>
    <div class="slot d-flex align-items-center justify-content-center"><svg width="60" height="60" viewBox="0 0 60 60"><circle cx="30" cy="30" r="30" fill="#f6f6f6"/><g transform="translate(9.500 9.500) scale(1.710)"><path fill="#e01e5a" d="M5.042 15.165a2.528 2.528 0 0 1-2.520 2.523A2.528 2.528 0 0 1 0 15.165a2.527 2.527 0 0 1 2.522-2.520h2.520v2.520zM6.313 15.165a2.527 2.527 0 0 1 2.521-2.520 2.527 2.527 0 0 1 2.521 2.520v6.313A2.528 2.528 0 0 1 8.834 24a2.528 2.528 0 0 1-2.521-2.522v-6.313z"/><path fill="#36c5f0" d="M8.834 5.042a2.528 2.528 0 0 1-2.521-2.520A2.528 2.528 0 0 1 8.834 0a2.528 2.528 0 0 1 2.521 2.522v2.520H8.834zM8.834 6.313a2.528 2.528 0 0 1 2.521 2.521 2.528 2.528 0 0 1-2.521 2.521H2.522A2.528 2.528 0 0 1 0 8.834a2.528 2.528 0 0 1 2.522-2.521h6.312z"/><path fill="#2eb67d" d="M18.956 8.834a2.528 2.528 0 0 1 2.522-2.521A2.528 2.528 0 0 1 24 8.834a2.528 2.528 0 0 1-2.522 2.521h-2.522V8.834zM17.688 8.834a2.528 2.528 0 0 1-2.523 2.521 2.527 2.527 0 0 1-2.520-2.521V2.522A2.527 2.527 0 0 1 15.165 0a2.528 2.528 0 0 1 2.523 2.522v6.312z"/><path fill="#ecb22e" d="M15.165 18.956a2.528 2.528 0 0 1 2.523 2.522A2.528 2.528 0 0 1 15.165 24a2.527 2.527 0 0 1-2.520-2.522v-2.522h2.520zM15.165 17.688a2.527 2.527 0 0 1-2.520-2.523 2.526 2.526 0 0 1 2.520-2.520h6.313A2.527 2.527 0 0 1 24 15.165a2.528 2.528 0 0 1-2.522 2.523h-6.313z"/></g></svg></div>
    <div class="slot d-flex align-items-center justify-content-center"><svg width="59" height="48" viewBox="0 0 59 48"><rect width="59" height="48" fill="#a9abae"/><path d="M2 3h55v43H2z" fill="#000"/><path d="M2 3h55v12C30 14 8 20 2 30z" fill="#363636"/><path d="M1 0h57v2.500H1z" fill="#e8e8f0"/><text x="3" y="9" font-size="5" font-family="Liberation Mono" fill="#ccc">C:\_</text></svg></div>
    <div class="slot d-flex align-items-center justify-content-center"><svg width="60" height="46" viewBox="0 0 60 46"><rect width="60" height="46" rx="2" fill="#aab4bf"/><path d="M4 4h52v38H4z" fill="#edf0f4"/><path d="M4 42V31l4 1 3 2 3-13 2-11 5 13 3-1 3 3 5 12 4-2 3-9 3-15 3 17 5 5 6-1v10z" fill="#8ccdf5"/><path d="M4 31l4 1 3 2 3-13 2-11 5 13 3-1 3 3 5 12 4-2 3-9 3-15 3 17 5 5 6-1" fill="none" stroke="#3f9de0" stroke-width="1.300"/></svg></div>
    <div class="slot d-flex align-items-center justify-content-center"><svg width="60" height="60" viewBox="0 0 60 60"><path d="M5 45L45 16V0L1 38q-1 2 0 3z" fill="#0569b0"/><path d="M1 20l4-5q1-1 3 0l37 31v14z" fill="#0e84d6"/><path d="M45 0l15 6v48l-15 6z" fill="#26a5f2"/></svg></div>
    <div class="slot d-flex align-items-center justify-content-center"><svg width="60" height="56" viewBox="0 0 60 56"><path d="M28 1A27 27 0 0 0 28 55 30 30 0 0 1 28 1z" fill="#f7941e" stroke="#f7941e" stroke-width="2.500"/><circle cx="33.500" cy="28" r="26.500" fill="#2c2255" stroke="#15122a"/><path d="M18 33a15 15 0 0 0 31 0z" fill="#473a8c"/><path d="M7.500 21.500h52M7 28h53M7.500 34.500h52" stroke="#fff" stroke-width="3.600"/></svg></div>
    <div class="slot d-flex align-items-center justify-content-center"><svg width="60" height="60" viewBox="0 0 60 60"><path d="M26 0L3 11 0 48l22 12 8-14z" fill="#21d789"/><path d="M25 0l20 10 2-10-2 30-28-10z" fill="#35de73"/><path d="M45 0l-9 12h11z" fill="#8fe84e"/><path d="M48 13l11 11-6 10z" fill="#07c3f2"/><path d="M53 25l6 30-18 5-23-8 14-16z" fill="#e3f64c"/><path d="M59 54L35 48l6 12z" fill="#b3ee44"/><rect x="11" y="11" width="38" height="38" fill="#000"/><text x="14" y="30" font-size="20" font-weight="700" fill="#fff">PC</text><path d="M15 42.500h15" stroke="#fff" stroke-width="3"/></svg></div>
    <div class="slot d-flex align-items-center justify-content-center"><svg width="60" height="60" viewBox="0 0 60 60"><path d="M8 0h17l12 14L12 52 0 24z" fill="#fe2857"/><path d="M8 0h8l-4 22-10 6z" fill="#fdb60d"/><path d="M0 36l12-10v14z" fill="#ff7a00"/><path d="M12 40L5 58l34-8z" fill="#e02fd8"/><path d="M41 0l19 16-2 34-22 10-12-12 12-40z" fill="#087cfa"/><path d="M41 0l8 14-20 6z" fill="#14b5f5"/><path d="M36 48l22-12-22 24z" fill="#2aa0ff"/><rect x="11" y="11" width="38" height="38" fill="#000"/><text x="15" y="30" font-size="18" font-weight="700" fill="#fff" font-family="DejaVu Sans Mono">IJ</text><path d="M15 42.500h15" stroke="#fff" stroke-width="3"/></svg></div>
    <div class="slot d-flex align-items-center justify-content-center"><svg width="60" height="60" viewBox="0 0 60 60"><circle cx="30" cy="30" r="30" fill="#03a8f9"/><path d="M11 29h32c2-1 2-4 0-7 4-1 4 2 5 3 2 0 4 0 4 1-1 4-4 4-6 4-3 9-9 14-20 14-10 0-15-6-15-15z" fill="#fff"/><path d="M14 24h4.500v4H14zM19.300 24h4.500v4h-4.500zM24.600 24h4.500v4h-4.500zM29.900 24h4.500v4h-4.500zM19.300 19.500h4.500v4h-4.500zM24.600 19.500h4.500v4h-4.500zM29.900 19.500h4.500v4h-4.500zM29.900 15h4.500v4h-4.500z" fill="#fff"/></svg></div>
    <div class="slot d-flex align-items-center justify-content-center"><svg width="56" height="56" viewBox="0 0 56 56"><circle cx="28" cy="28" r="28" fill="#ff6c37"/><circle cx="40" cy="16" r="5" fill="#fff"/><path d="M36 20l4 3-8 12-11 6-6 6-5-1 4-3 8-13z" fill="#fff"/><path d="M34 23L20 38M37 24l-10 13" stroke="#ff6c37" stroke-width="1.300"/></svg></div>
  </div>
  <div class="tray d-flex align-items-center">
    <svg width="32" height="18" viewBox="0 0 32 18"><path d="M1 17L16 2l15 15" fill="none" stroke="#fff" stroke-width="2.200"/></svg>
    <svg style="margin-left:44px" width="40" height="30" viewBox="0 0 40 30" fill="none" stroke="#fff" stroke-width="3" stroke-linecap="round"><path d="M1.500 10.500a26 26 0 0 1 37 0M7.500 16.500a18 18 0 0 1 25 0M13 22a10.500 10.500 0 0 1 14 0"/><circle cx="20" cy="26.500" r="2" fill="#fff" stroke-width="2"/></svg>
    <svg style="margin-left:20px" width="38" height="30" viewBox="0 0 38 30" fill="none" stroke="#fff" stroke-width="2.300"><path d="M1.500 8.500h6L17 1.500v27l-9.500-7h-6z" stroke-linejoin="round"/><path d="M23 8l14 14M37 8L23 22"/></svg>
    <svg style="margin-left:22px" width="40" height="34" viewBox="0 0 40 34"><path d="M4 0v6M10 0v6" stroke="#fff" stroke-width="2.500"/><path d="M0 5h13v7q0 4-5 4.500V33H5V16.500Q0 16 0 12z" fill="#fff"/><path d="M16 7h14a4 4 0 0 1 4 4v17a4 4 0 0 1-4 4H10" fill="none" stroke="#fff" stroke-width="2.500"/><path d="M16 11h9v16H10v-7q6-2 6-9zM35 14l5 2v6l-5 2z" fill="#fff"/></svg>
    <div class="clock text-end">2:37 PM<br>5/15/2022</div>
    <span class="cnt d-flex align-items-center justify-content-center">1</span>
  </div>
</footer>
</body>
</html>
